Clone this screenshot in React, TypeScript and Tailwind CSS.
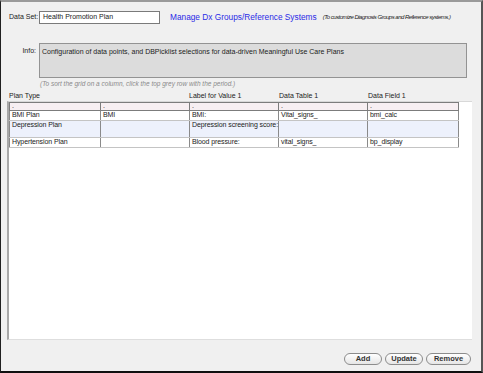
const rows = [
  { plan: "BMI Plan", code: "BMI", label: "BMI:", table: "Vital_signs_", field: "bmi_calc", tall: false, tint: false },
  { plan: "Depression Plan", code: "", label: "Depression screening score:", table: "", field: "", tall: true, tint: true },
  { plan: "Hypertension Plan", code: "", label: "Blood pressure:", table: "vital_signs_", field: "bp_display", tall: false, tint: false },
];

const colWidths = ["w-[91px]", "w-[89px]", "w-[89px]", "w-[89px]", "w-[91px]"];

function PillButton({ label, width }: { label: string; width: string }) {
  return (
    <button
      className={`${width} h-[12px] rounded-full border border-[#8c8c8c] bg-gradient-to-b from-white to-[#e6e6e6] text-[7.5px] font-semibold leading-none text-[#333]`}
    >
      {label}
    </button>
  );
}

export default function App() {
  return (
    <div className="w-[483px] h-[373px] bg-[#f0f0f0] border-l border-t-2 border-r-2 border-b-2 border-l-[#202020] border-t-[#9a9a9a] border-r-[#555] border-b-[#101010] flex flex-col font-['Liberation_Sans',sans-serif] text-[7px] text-[#222]">
      {/* Data set row */}
      <div className="mt-[9px] flex items-center h-[13px] pl-[8px] whitespace-nowrap">
        <span className="w-[30px]">Data Set:</span>
        <div className="w-[121px] h-[13px] border border-[#7a7a7a] bg-white pl-[3px] flex items-center">
          Health Promotion Plan
        </div>
        <span className="ml-[10px] text-[#2a2ae6] text-[8.3px]">Manage Dx Groups/Reference Systems</span>
        <span className="ml-[6px] italic text-[6px] tracking-[-0.5px]">(To customize Diagnosis Groups and Reference systems.)</span>
      </div>

      {/* Info */}
      <div className="mt-[19px] flex pl-[8px]">
        <span className="w-[30px] text-right pr-[3px] pt-[3px]">Info:</span>
        <div className="w-[428px] h-[35px] border border-[#939393] bg-[#dcdcdc] px-[2px] pt-[3px]">
          Configuration of data points, and DBPicklist selections for data-driven Meaningful Use Care Plans
        </div>
      </div>
      <div className="pl-[39px] mt-[1px] leading-[9px] italic text-[6.5px] text-[#8a8a8a]">
        (To sort the grid on a column, click the top grey row with the period.)
      </div>

      {/* Column headers */}
      <div className="mt-[4px] flex pl-[8px] leading-[8px]">
        <span className="w-[180px]">Plan Type</span>
        <span className="w-[90px]">Label for Value 1</span>
        <span className="w-[89px]">Data Table 1</span>
        <span>Data Field 1</span>
      </div>

      {/* Grid */}
      <div className="mt-[1px] ml-[6px] w-[465px] h-[239px] bg-white border-l-2 border-l-[#a8a8a8] border-t border-t-[#d8d8d8] border-b border-b-[#dedede]">
        <table className="table-fixed w-[449px] border-collapse border border-[#7c7c7c] leading-[8px] whitespace-nowrap">
          <tbody>
            <tr className="bg-[#f7eff2] h-[8px]">
              {colWidths.map((w, i) => (
                <td key={i} className={`${w} border border-[#7c7c7c] px-[2px] align-top text-[7px] leading-[5px]`}>
                  .
                </td>
              ))}
            </tr>
            {rows.map((r) => (
              <tr key={r.plan} className={`${r.tint ? "bg-[#edf1fc]" : "bg-white"} ${r.tall ? "h-[17px]" : "h-[10px]"}`}>
                {[r.plan, r.code, r.label, r.table, r.field].map((c, i) => (
                  <td
                    key={i}
                    className={`${colWidths[i]} border-x border-x-[#8a8a8a] border-y border-y-[#c4c4c4] px-[2px] align-top tracking-[-0.1px]`}
                  >
                    {c}
                  </td>
                ))}
              </tr>
            ))}
          </tbody>
        </table>
      </div>

      {/* Buttons */}
      <div className="flex-1 flex justify-end items-start pt-[13px] pr-[10px] gap-[3px]">
        <PillButton label="Add" width="w-[38px]" />
        <PillButton label="Update" width="w-[38px]" />
        <PillButton label="Remove" width="w-[45px]" />
      </div>
    </div>
  );
}
